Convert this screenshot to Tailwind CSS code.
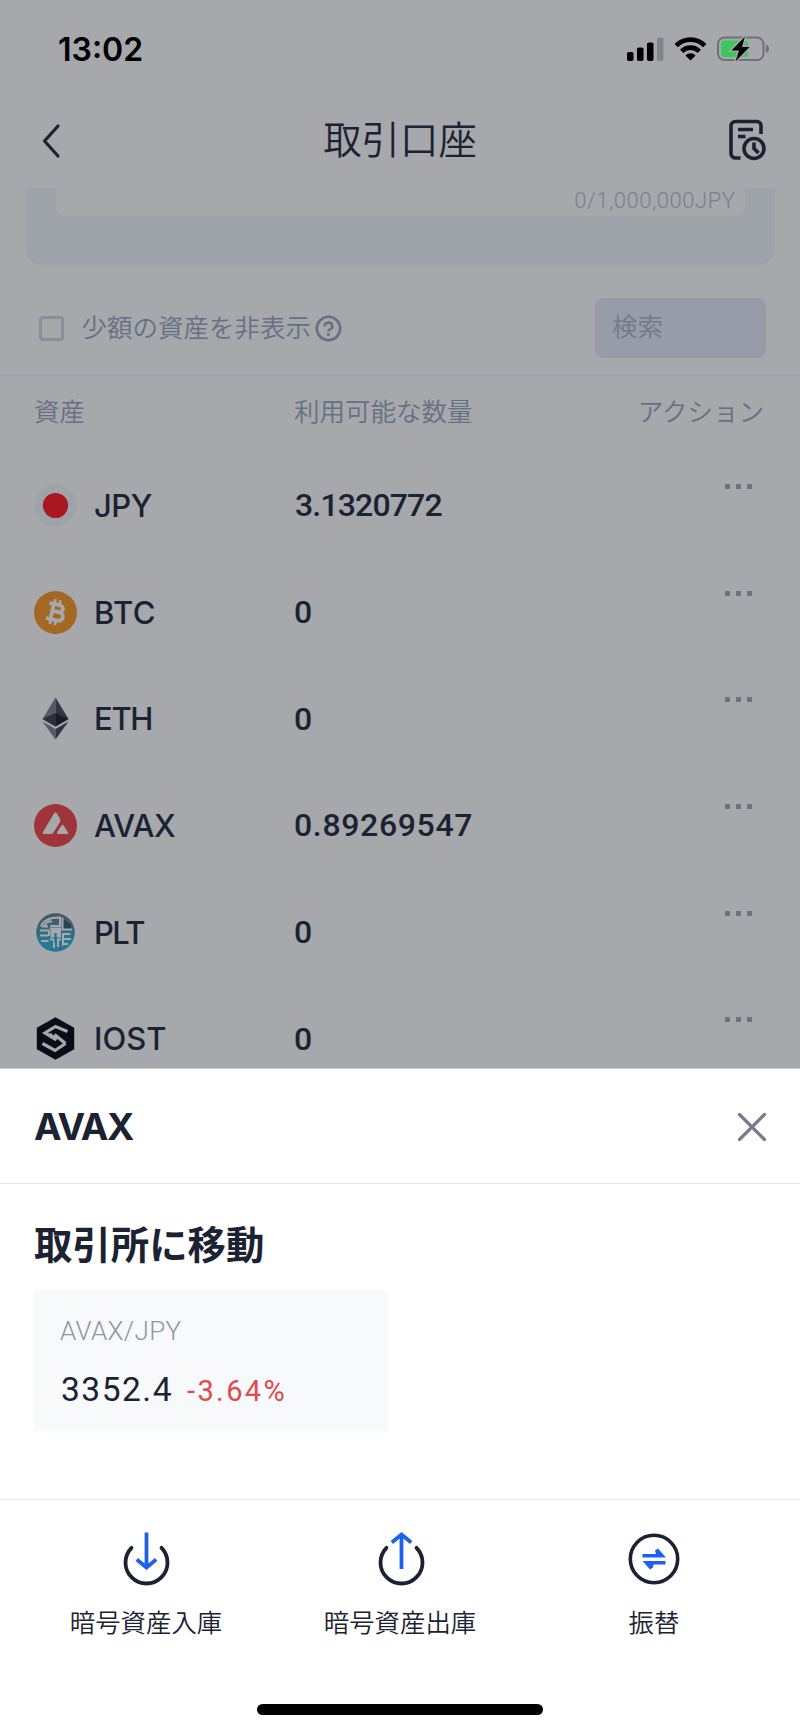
<!DOCTYPE html>
<html lang="ja">
<head>
<meta charset="utf-8">
<title>取引口座</title>
<script src="https://cdn.jsdelivr.net/npm/@tailwindcss/browser@4"></script>
</head>
<body class="bg-white">
<div class="relative flex h-[1732px] w-[800px] flex-col overflow-hidden bg-white font-['Roboto','Noto_Sans_CJK_JP',sans-serif] text-[#1b2232]">
  <div class="flex h-[1068px] flex-col overflow-hidden bg-[#a6a8ac]">
    <!-- status bar -->
    <header class="flex h-[98px] shrink-0 items-center justify-between pl-[58px] pr-[30px]">
      <div class="pt-px font-['Inter'] text-[32px] font-semibold leading-none text-black">13:02</div>
      <div class="flex items-center">
        <svg class="h-[28px] w-[144px]" viewBox="0 0 144 28">
          <rect x="1" y="17" width="6.5" height="9" rx="1.8"/><rect x="11" y="12.500" width="6.500" height="13.500" rx="1.800"/><rect x="21" y="7.500" width="6.500" height="18.500" rx="1.800"/><rect x="31" y="2.500" width="6.500" height="23.500" rx="1.800" fill="#83858c"/>
          <g transform="translate(48,2)" fill="none" stroke="#000" stroke-width="4.600"><path d="M2.200 8.600a20 20 0 0 1 28.600 0"/><path d="M7.700 14.300a12.300 12.300 0 0 1 17.600 0"/><path d="M16.500 23.500l-5.100-5.100a7.300 7.300 0 0 1 10.200 0z" fill="#000" stroke="none"/></g>
          <rect x="92" y="2.500" width="45.500" height="22.500" rx="6.500" fill="none" stroke="#6f7177" stroke-width="2"/>
          <path d="M140 9.500c4 1.500 4 7 0 8.500z" fill="#6f7177"/>
          <rect x="95" y="5.500" width="27" height="16.500" rx="3.500" fill="#3cc75c"/>
          <path d="M119 1.500l-13.500 14h7.500l-3.500 11 14-14.500h-7.500z" stroke="#a6a8ac" stroke-width="3" paint-order="stroke"/>
        </svg>
      </div>
    </header>
    <!-- title bar -->
    <nav class="grid h-[90px] shrink-0 grid-cols-[1fr_auto_1fr] items-center pl-[40px] pr-[32px] pb-[4px]">
      <svg class="h-[36px] w-[22px]" viewBox="0 0 22 36" fill="none" stroke="#1b2232" stroke-width="3.200" stroke-linecap="round" stroke-linejoin="round"><path d="M18 3L4.500 18 18 33"/></svg>
      <h1 class="mr-[8px] text-[38.400px] font-[350] leading-none">取引口座</h1>
      <svg class="h-[44px] w-[40px] justify-self-end" viewBox="0 0 40 44" fill="none" stroke="#1b2232" stroke-width="3.600"><path d="M12.500 39H7.500a4.500 4.500 0 0 1-4.500-4.500V7a4.500 4.500 0 0 1 4.500-4.500h21.500a4 4 0 0 1 4 4V15"/><path d="M10 10.500h15M10 17.500h7.500"/><circle cx="26" cy="29.500" r="10"/><path d="M26 23.500v6l4.500 4.500"/></svg>
    </nav>
    <!-- amount panel, scrolled under the title bar -->
    <section class="mx-[25.500px] h-[77px] shrink-0 rounded-b-[16px] bg-[#9ea3aa] px-[30px]">
      <div class="flex h-[28px] justify-end rounded-b-[8px] bg-[#a6a8ac] pr-[9px] text-[22px] font-light leading-[25px] tracking-[0.550px] text-[#7c8088]">0/1,000,000JPY</div>
    </section>
    <section class="flex h-[111px] shrink-0 items-center justify-between border-b-2 border-[#9da3a8] pl-[38.500px] pr-[34px] pt-[17px] text-[25.500px] font-[350] text-[#657083]">
      <div class="flex items-center">
        <div class="size-[25px] rounded-[4px] border-[3px] border-[#898e99]"></div>
        <span class="ml-[18px] leading-[30px]">少額の資産を非表示</span>
        <svg class="ml-[4px] size-[27px]" viewBox="0 0 27 27" fill="none" stroke="#657083" stroke-width="2.600"><circle cx="13.500" cy="13.500" r="11.700"/><path d="M9.700 11.300a3.800 3.400 0 1 1 5.500 2.800c-1.300.6-1.800 1.200-1.800 2.500"/><path d="M13.400 18v2.900"/></svg>
      </div>
      <div class="flex h-[60px] w-[171px] items-center rounded-[8px] bg-[#979ca8] pl-[17px] mb-[15px] mt-[14px] text-[#747985]">検索</div>
    </section>
    <!-- asset table -->
    <div class="grid h-[76px] shrink-0 grid-cols-[260px_1fr_auto] items-center pb-[3px] pl-[34px] pr-[36px] text-[25.500px] font-[350] text-[#657083]"><span>資産</span><span>利用可能な数量</span><span>アクション</span></div>
    <main class="flex shrink-0 flex-col text-[32px] font-medium leading-none">
      <div class="grid h-[106.700px] grid-cols-[60px_200px_1fr_auto] items-center pl-[34px] pr-[48px]">
        <svg class="size-[43px]" viewBox="0 0 43 43"><circle cx="21.500" cy="21.500" r="21" fill="#9ea3ab"/><circle cx="21.500" cy="21.500" r="12.600" fill="#a91820"/></svg>
        <span class="font-['Inter'] text-[31px] tracking-[-0.500px]">JPY</span><span class="pl-px tracking-[-0.850px]">3.1320772</span>
        <div class="flex gap-[6px] self-start pt-[32px]"><i class="size-[5px] rounded-[1px] bg-[#6b7180]"></i><i class="size-[5px] rounded-[1px] bg-[#6b7180]"></i><i class="size-[5px] rounded-[1px] bg-[#6b7180]"></i></div>
      </div>
      <div class="grid h-[106.700px] grid-cols-[60px_200px_1fr_auto] items-center pl-[34px] pr-[48px]">
        <svg class="size-[43px]" viewBox="0 0 43 43"><circle cx="21.500" cy="21.500" r="21.500" fill="#a36823"/><g transform="rotate(13 21.500 21.500)" fill="none" stroke="#a6a8ac"><path stroke-width="3.800" d="M13.500 13.500H23.500c6 0 6 7 0 7H18M18 20.500h6.500c7 0 7 8.500 0 8.500H13.500M18 13.500V29"/><path stroke-width="2.700" d="M18.500 13V8.500M23.700 13V8.500M18.500 29.500V34M23.700 29.500V34"/></g></svg>
        <span class="font-['Inter'] text-[31px] tracking-[0.400px]">BTC</span><span>0</span>
        <div class="flex gap-[6px] self-start pt-[32px]"><i class="size-[5px] rounded-[1px] bg-[#6b7180]"></i><i class="size-[5px] rounded-[1px] bg-[#6b7180]"></i><i class="size-[5px] rounded-[1px] bg-[#6b7180]"></i></div>
      </div>
      <div class="grid h-[106.700px] grid-cols-[60px_200px_1fr_auto] items-center pl-[34px] pr-[48px]">
        <svg class="size-[43px]" viewBox="0 0 43 43"><path d="M21.500.5L8.500 22l13 7.500z" fill="#555b65"/><path d="M21.500.5l13 21.500-13 7.500z" fill="#303642"/><path d="M21.500 16L8.500 22l13 7.500z" fill="#292f3b"/><path d="M21.500 16l13 6-13 7.500z" fill="#171d2a"/><path d="M8.500 24.500l13 7.500v10.500z" fill="#555b65"/><path d="M34.500 24.500l-13 7.500v10.500z" fill="#303642"/></svg>
        <span class="font-['Inter'] text-[31px] tracking-[-1.300px]">ETH</span><span>0</span>
        <div class="flex gap-[6px] self-start pt-[32px]"><i class="size-[5px] rounded-[1px] bg-[#6b7180]"></i><i class="size-[5px] rounded-[1px] bg-[#6b7180]"></i><i class="size-[5px] rounded-[1px] bg-[#6b7180]"></i></div>
      </div>
      <div class="grid h-[106.700px] grid-cols-[60px_200px_1fr_auto] items-center pl-[34px] pr-[48px]">
        <svg class="size-[43px]" viewBox="0 0 43 43"><circle cx="21.500" cy="21.500" r="21.500" fill="#9d353a"/><path d="M20 9.500q1.500-2 3 0l3 5.500q.8 1.500 0 3l-6.500 10.500q-1 1.500-3 1.500H10q-2 0-1-2zM27.500 21.500q1-1.500 2 0l4.300 6.500q1.200 2-1 2h-8.600q-2 0-1-2z" fill="#a6a8ac"/></svg>
        <span class="font-['Inter'] text-[31px] tracking-[-0.500px]">AVAX</span><span class="tracking-[0.650px]">0.89269547</span>
        <div class="flex gap-[6px] self-start pt-[32px]"><i class="size-[5px] rounded-[1px] bg-[#6b7180]"></i><i class="size-[5px] rounded-[1px] bg-[#6b7180]"></i><i class="size-[5px] rounded-[1px] bg-[#6b7180]"></i></div>
      </div>
      <div class="grid h-[106.700px] grid-cols-[60px_200px_1fr_auto] items-center pl-[34px] pr-[48px]">
        <svg class="size-[43px]" viewBox="0 0 43 43"><defs><linearGradient id="plt" x1="0" y1="0" x2="0" y2="1"><stop offset="0" stop-color="#4b5362"/><stop offset=".4" stop-color="#35677a"/><stop offset=".75" stop-color="#287895"/></linearGradient></defs><circle cx="21.500" cy="21.500" r="19.300" fill="url(#plt)"/><path d="M27.500 6.500L37 13.500V18h-7.500z" fill="#2b4350"/><g fill="none" stroke="#a6a8ac" stroke-width="2"><path d="M7 15.500C9 10 15 6.500 26 6.500V15H16.500M8 15.500h6M18 10.500h-3.500q-3 2-4.500 5M28.500 6.500V18.500H38M6 19.500h9M6 24.500h8M7 30h7.500M15 19.500V25M36.500 23H29V34.500M37 28h-8M34 33h-5"/><path d="M16 28.500h4V37M27 28.500h-3V36M15.500 17.500H27"/></g><rect x="16.500" y="17.500" width="10.500" height="9" fill="#a6a8ac"/><path d="M21.500 22v10" stroke="#287895" stroke-width="2.500"/></svg>
        <span class="font-['Inter'] text-[31px] tracking-[-1.600px]">PLT</span><span>0</span>
        <div class="flex gap-[6px] self-start pt-[32px]"><i class="size-[5px] rounded-[1px] bg-[#6b7180]"></i><i class="size-[5px] rounded-[1px] bg-[#6b7180]"></i><i class="size-[5px] rounded-[1px] bg-[#6b7180]"></i></div>
      </div>
      <div class="grid h-[106.700px] grid-cols-[60px_200px_1fr_auto] items-center pl-[34px] pr-[48px]">
        <svg class="size-[43px]" viewBox="0 0 43 43"><path d="M21.500.3l18.700 10.500v21.400L21.500 42.700 2.800 32.200V10.800z" fill="#0a0d16"/><path d="M33.500 14.500L21.500 9.500 11 16l11 6.500M31.500 26.500L21 33.500 8.500 26.500M20.500 17.500l11 9M15.500 17l7 6" fill="none" stroke="#a6a8ac" stroke-width="3.200"/></svg>
        <span class="font-['Inter'] text-[31px]">IOST</span><span>0</span>
        <div class="flex gap-[6px] self-start pt-[32px]"><i class="size-[5px] rounded-[1px] bg-[#6b7180]"></i><i class="size-[5px] rounded-[1px] bg-[#6b7180]"></i><i class="size-[5px] rounded-[1px] bg-[#6b7180]"></i></div>
      </div>
    </main>
  </div>
  <!-- bottom sheet -->
  <section class="flex h-[664px] shrink-0 flex-col border-t border-[#c9cacd] bg-white">
    <div class="flex h-[115px] shrink-0 items-center justify-between border-b border-[#e4e5e8] pl-[34px] pr-[33px]">
      <h2 class="font-['Inter'] text-[37px] font-bold leading-none tracking-[-1.300px]">AVAX</h2>
      <svg class="mt-[2px] size-[30px]" viewBox="0 0 30 30" fill="none" stroke="#777c8a" stroke-width="3.200" stroke-linecap="round"><path d="M2.500 2.500l25 25M27.500 2.500l-25 25"/></svg>
    </div>
    <div class="flex h-[316px] shrink-0 flex-col border-b border-[#e4e5e8] pl-[34px] pt-[42px]">
      <h3 class="text-[38.400px] font-bold leading-[40px]">取引所に移動</h3>
      <div class="mt-[24px] flex h-[141px] w-[354px] flex-col bg-[#f8f9fb] pl-[26px] pt-[26px]">
        <div class="text-[26px] font-light leading-[30px] tracking-[0.350px] text-[#8e95a3]">AVAX/JPY</div>
        <div class="mt-[24px] flex items-baseline pl-px leading-[40px]"><span class="text-[33.500px] tracking-[1.500px]">3352.4</span><span class="ml-[14px] text-[29px] tracking-[2.400px] text-[#e2494b]">-3.64%</span></div>
      </div>
    </div>
    <div class="grid grid-cols-3 px-[19px] pt-[28px] text-center text-[25.400px] font-[350]">
      <div class="flex flex-col items-center gap-[20px]">
        <svg class="h-[60px] w-[52px]" viewBox="0 0 52 60" fill="none" stroke-width="3.800"><path d="M11.500 19.800A21 21 0 1 0 41.500 19.800" stroke="#1b2232" stroke-linecap="round"/><path d="M26.500 4.500v35M16.800 31.500l9.700 8 9.700-8" stroke="#1f60ee"/></svg>
        <span class="leading-[30px]">暗号資産入庫</span>
      </div>
      <div class="flex flex-col items-center gap-[20px]">
        <svg class="ml-[2px] h-[60px] w-[52px]" viewBox="0 0 52 60" fill="none" stroke-width="3.800"><path d="M11.500 19.800A21 21 0 1 0 41.500 19.800" stroke="#1b2232" stroke-linecap="round"/><path d="M26.500 41V6M16.800 14.500l9.700-8 9.700 8" stroke="#1f60ee"/></svg>
        <span class="leading-[30px]">暗号資産出庫</span>
      </div>
      <div class="flex flex-col items-center gap-[20px]">
        <svg class="h-[60px] w-[52px]" viewBox="0 0 52 60"><circle cx="26" cy="31" r="23.700" fill="none" stroke="#1b2232" stroke-width="3.600"/><path d="M14.500 26h13.500l-1-3.500 3-2 8 9H14.500zM37.500 36.500H25.500l-.5 3-3 2-7.500-8.500h23z" fill="#1f60ee"/></svg>
        <span class="leading-[30px]">振替</span>
      </div>
    </div>
    <div class="mx-auto mb-[17px] mt-auto h-[11px] w-[286px] rounded-full bg-black"></div>
  </section>
</div>
</body>
</html>
